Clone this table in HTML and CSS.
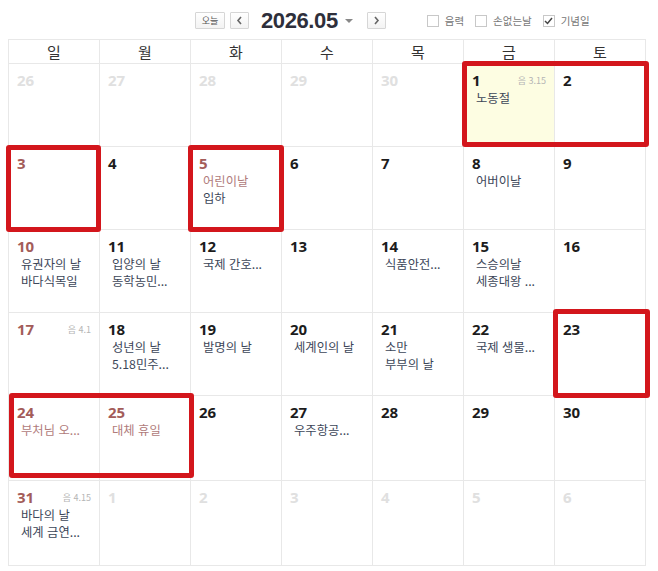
FILE: index.html
```html
<!DOCTYPE html>
<html lang="ko">
<head>
<meta charset="utf-8">
<link rel="stylesheet" href="styles.css">
</head>
<body>
<div class="topbar">
  <div class="nav">
    <button class="btn today">오늘</button>
    <button class="btn arrow"><svg width="7" height="9" viewBox="0 0 7 9"><path d="M5 1 L2 4.5 L5 8" fill="none" stroke="#666" stroke-width="1.6"/></svg></button>
    <span class="month">2026.05</span>
    <span class="caret"></span>
    <button class="btn arrow next"><svg width="7" height="9" viewBox="0 0 7 9"><path d="M2 1 L5 4.5 L2 8" fill="none" stroke="#666" stroke-width="1.6"/></svg></button>
  </div>
  <div class="opts">
    <label class="opt"><span class="box"></span>음력</label>
    <label class="opt"><span class="box"></span>손없는날</label>
    <label class="opt"><span class="box checked"><svg width="9" height="8" viewBox="0 0 9 8"><path d="M1 4 L3.5 6.5 L8 1" fill="none" stroke="#444" stroke-width="1.5"/></svg></span>기념일</label>
  </div>
</div>

<div class="cal">
  <div class="grid">
    <div class="dow">일</div><div class="dow">월</div><div class="dow">화</div><div class="dow">수</div><div class="dow">목</div><div class="dow">금</div><div class="dow">토</div>

    <div class="cell other"><div class="num">26</div></div>
    <div class="cell other"><div class="num">27</div></div>
    <div class="cell other"><div class="num">28</div></div>
    <div class="cell other"><div class="num">29</div></div>
    <div class="cell other"><div class="num">30</div></div>
    <div class="cell today-bg"><div class="head"><span class="num">1</span><span class="lunar">음 3.15</span></div><div class="ev">노동절</div></div>
    <div class="cell"><div class="num">2</div></div>

    <div class="cell sun"><div class="num">3</div></div>
    <div class="cell"><div class="num">4</div></div>
    <div class="cell hol"><div class="num">5</div><div class="ev red">어린이날</div><div class="ev">입하</div></div>
    <div class="cell"><div class="num">6</div></div>
    <div class="cell"><div class="num">7</div></div>
    <div class="cell"><div class="num">8</div><div class="ev">어버이날</div></div>
    <div class="cell"><div class="num">9</div></div>

    <div class="cell sun"><div class="num">10</div><div class="ev">유권자의 날</div><div class="ev">바다식목일</div></div>
    <div class="cell"><div class="num">11</div><div class="ev">입양의 날</div><div class="ev">동학농민...</div></div>
    <div class="cell"><div class="num">12</div><div class="ev">국제 간호...</div></div>
    <div class="cell"><div class="num">13</div></div>
    <div class="cell"><div class="num">14</div><div class="ev">식품안전...</div></div>
    <div class="cell"><div class="num">15</div><div class="ev">스승의날</div><div class="ev">세종대왕 ...</div></div>
    <div class="cell"><div class="num">16</div></div>

    <div class="cell sun"><div class="head"><span class="num">17</span><span class="lunar">음 4.1</span></div></div>
    <div class="cell"><div class="num">18</div><div class="ev">성년의 날</div><div class="ev">5.18민주...</div></div>
    <div class="cell"><div class="num">19</div><div class="ev">발명의 날</div></div>
    <div class="cell"><div class="num">20</div><div class="ev">세계인의 날</div></div>
    <div class="cell"><div class="num">21</div><div class="ev">소만</div><div class="ev">부부의 날</div></div>
    <div class="cell"><div class="num">22</div><div class="ev">국제 생물...</div></div>
    <div class="cell"><div class="num">23</div></div>

    <div class="cell sun"><div class="num">24</div><div class="ev red">부처님 오...</div></div>
    <div class="cell hol"><div class="num">25</div><div class="ev red">대체 휴일</div></div>
    <div class="cell"><div class="num">26</div></div>
    <div class="cell"><div class="num">27</div><div class="ev">우주항공...</div></div>
    <div class="cell"><div class="num">28</div></div>
    <div class="cell"><div class="num">29</div></div>
    <div class="cell"><div class="num">30</div></div>

    <div class="cell sun"><div class="head"><span class="num">31</span><span class="lunar">음 4.15</span></div><div class="ev">바다의 날</div><div class="ev">세계 금연...</div></div>
    <div class="cell other"><div class="num">1</div></div>
    <div class="cell other"><div class="num">2</div></div>
    <div class="cell other"><div class="num">3</div></div>
    <div class="cell other"><div class="num">4</div></div>
    <div class="cell other"><div class="num">5</div></div>
    <div class="cell other"><div class="num">6</div></div>
  </div>

  <div class="mark m1"></div>
  <div class="mark m2"></div>
  <div class="mark m3"></div>
  <div class="mark m4"></div>
  <div class="mark m5"></div>
</div>
</body>
</html>
```

FILE: styles.css
```css
* { box-sizing: border-box; }
html, body { margin: 0; padding: 0; background: #fff; }
body {
  width: 658px;
  height: 571px;
  overflow: hidden;
  font-family: "Noto Sans CJK KR", "Noto Sans", sans-serif;
  color: #333;
}

.topbar {
  height: 39px;
  display: flex;
  align-items: center;
  padding-left: 195px;
  padding-top: 2px;
}
.nav { display: flex; align-items: center; }
.btn {
  height: 17px;
  border: 1px solid #d6d6d6;
  background: linear-gradient(#fff, #f3f3f3);
  border-radius: 1px;
  padding: 0;
  margin: 0;
  display: flex;
  align-items: center;
  justify-content: center;
  font-family: "Noto Sans CJK KR", sans-serif;
  font-size: 9px;
  color: #555;
}
.today { width: 30px; }
.arrow { width: 19px; margin-left: 5px; }
.month {
  font-family: "Liberation Sans", Arial, sans-serif;
  font-weight: bold;
  font-size: 22px;
  color: #2e2f3b;
  margin-left: 12px;
  letter-spacing: -0.4px;
}
.caret {
  width: 0; height: 0;
  border-left: 4px solid transparent;
  border-right: 4px solid transparent;
  border-top: 4px solid #888;
  margin-left: 7px;
  margin-top: 1px;
}
.next { margin-left: 14px; }

.opts { display: flex; align-items: center; margin-left: 41px; }
.opt {
  display: flex;
  align-items: center;
  font-size: 10.5px;
  color: #777;
  margin-right: 11px;
}
.box {
  width: 12px; height: 12px;
  border: 1px solid #c8c8c8;
  background: #fff;
  margin-right: 6px;
  display: flex;
  align-items: center;
  justify-content: center;
}

.cal {
  position: relative;
  margin-left: 8px;
  width: 638px;
}
.grid {
  display: grid;
  grid-template-columns: repeat(7, 91px);
  grid-template-rows: 24px repeat(4, 83px) 85px 85px;
  border-top: 1px solid #e8e8e8;
  border-left: 1px solid #e8e8e8;
}
.dow, .cell {
  border-right: 1px solid #e8e8e8;
  border-bottom: 1px solid #e8e8e8;
}
.dow {
  display: flex;
  align-items: center;
  justify-content: center;
  font-size: 15px;
  color: #333;
}
.cell { padding: 6px 8px 0 8px; }
.head { display: flex; justify-content: space-between; align-items: center; height: 20px; }
.num {
  font-family: "Open Sans", "Noto Sans", sans-serif;
  font-weight: bold;
  font-size: 15px;
  line-height: 20px;
  height: 20px;
  color: #1c1c1c;
}
.lunar { font-size: 9px; color: #b5b5b5; }
.ev {
  font-size: 12.3px;
  line-height: 17px;
  color: #3c4658;
  margin-left: 4px;
  white-space: nowrap;
}
.ev:first-of-type { margin-top: 2px; }
.red { color: #b07b7b; }
.sun .num, .hol .num { color: #a35c59; }
.other .num { color: #e0e0e0; }
.today-bg { background: #fdfde2; }

.mark {
  position: absolute;
  border: 5px solid #d3161c;
  border-radius: 3px;
}
.m1 { left: 454px; top: 22px; width: 187px; height: 86px; }
.m2 { left: -2px; top: 106px; width: 95px; height: 87px; }
.m3 { left: 180px; top: 106px; width: 96px; height: 87px; }
.m4 { left: 545px; top: 270px; width: 97px; height: 89px; }
.m5 { left: 1px; top: 354px; width: 185px; height: 85px; }
```
